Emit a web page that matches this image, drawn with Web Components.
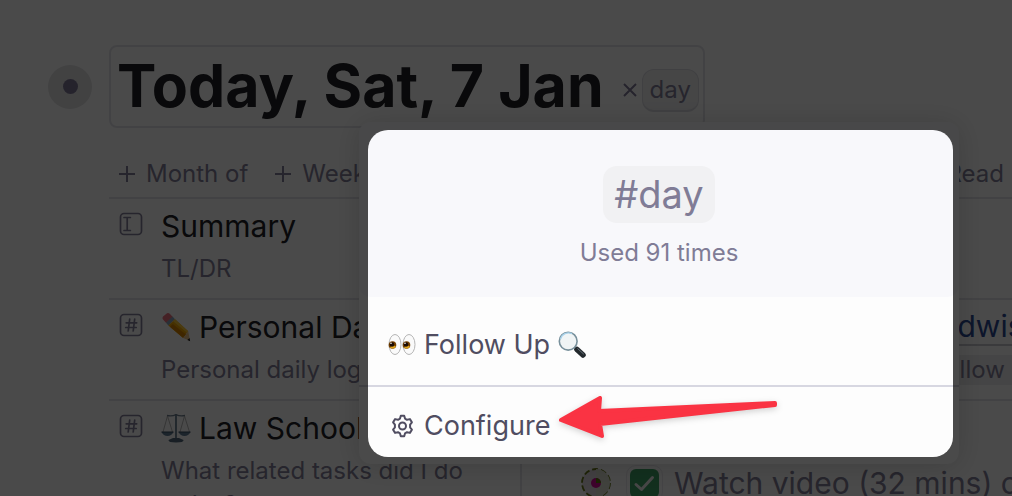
<!DOCTYPE html>
<html lang="en">
<head>
<meta charset="utf-8">
<meta name="viewport" content="width=device-width, initial-scale=1">
<title>Today, Sat, 7 Jan</title>
<style>
  body { margin: 0; background: #fff; font-family: Inter, "Liberation Sans", sans-serif; overflow: hidden; }
</style>
</head>
<body>
<day-page></day-page>

<template id="tpl-day-page">
  <style>
    :host {
      display: block; position: relative; box-sizing: border-box;
      height: 100vh; overflow: hidden; padding: 45px 0 0 48px;
      --ink: #222226; --muted: #85819a; --line: #e4e4ea; --label: #504d61;
      color: var(--ink);
    }
    main { display: flex; flex-direction: column; }
    .fields { margin-left: 61px; }
    .value { display: flex; flex-direction: column; white-space: nowrap; }
    .value.source { padding-left: 384px; }
    .value.tasks { border-left: 2px solid var(--line); padding: 61px 0 40px 59px; }
    .value a { padding-top: 8px; font-size: 30px; line-height: 36px; color: #2a4a94; text-decoration: none; border-bottom: 2px solid #c9c9d0; }
    .chip { font-size: 24px; line-height: 30px; margin-top: 9px; background: #eeeef0; color: var(--muted); padding-left: 28px; }
    .pencil, .scales { flex: none; }
  </style>
  <main>
    <day-title tag="day">Today, Sat, 7 Jan</day-title>
    <div class="fields">
      <add-bar></add-bar>
      <field-row kind="text">
        <span slot="name">Summary</span>
        <span slot="hint">TL/DR</span>
      </field-row>
      <field-row kind="tag">
        <svg slot="name" class="pencil" width="30" height="30" viewBox="0 0 30 30" role="img" aria-label="pencil">
          <path d="M2 4.500 6 1.200Q7.500 .4 9 2L12 5.200 5.200 11 2 7.600Q.8 6 2 4.500Z" fill="#ee7280"/>
          <path d="M5 10.800 11.500 4.600 14 7.200 7.400 13.600Z" fill="#8ca7bd"/>
          <path d="M7.300 13.600 14 7.200 27.200 19.200 22.200 26Z" fill="#f4a800"/>
          <path d="M9 14.800 11.800 12 25 22.500 22.200 26Z" fill="#d98500"/>
          <path d="M12 9.200 14 7.200 27.200 19.200 26.400 21Z" fill="#ffca38"/>
          <path d="M22.200 26Q22.800 23.600 24.600 23.500 24.600 20.400 27.200 19.200L29 28.800Z" fill="#f0c68c"/>
          <path d="M26.300 28 28.600 26 29.200 29.200Z" fill="#222"/>
        </svg>
        <span slot="name">Personal Daily</span>
        <span slot="hint">Personal daily log</span>
        <div slot="value" class="value source">
          <a href="#readwise">Readwise</a>
          <span class="chip">Follow Up</span>
        </div>
      </field-row>
      <field-row kind="tag">
        <svg slot="name" class="scales" width="30" height="30" viewBox="0 0 30 30" role="img" aria-label="scales" fill="none">
          <path d="M6 2.500Q11 3.500 15 1.600 19 3.500 24 2.500" stroke="#708090" stroke-width="1.300"/>
          <path d="M15 1V27" stroke="#697f91" stroke-width="1.800"/>
          <path d="M6.500 3 2 19M6.500 3 11.500 19M23.500 3 19 19M23.500 3 28.500 19" stroke="#a5a5a5" stroke-width=".8"/>
          <path d="M.5 19H12.500Q10.500 23 6.500 23T.5 19ZM17.500 19H29.500Q27.500 23 23.500 23T17.500 19Z" fill="#607d95"/>
          <path d="M.5 19H12.500M17.500 19H29.500" stroke="#354d60"/>
          <path d="M12 25H18L22.500 27Q23 29.500 15 29.500T7.500 27Z" fill="#52697b"/>
        </svg>
        <span slot="name">Law School</span>
        <span slot="hint">What related tasks did I do today?</span>
        <div slot="value" class="value tasks"><task-item>Watch video (32 mins) on</task-item></div>
      </field-row>
    </div>
  </main>
  <tag-popover tag="#day" usage="Used 91 times"></tag-popover>
</template>

<template id="tpl-day-title">
  <style>
    :host { display: flex; align-items: center; gap: 17px; }
    .bullet { flex: none; width: 44px; height: 44px; border-radius: 50%; background: #e2e2e4; display: grid; place-items: center; }
    .bullet::after { content: ""; width: 15px; height: 15px; border-radius: 50%; background: #807a99; }
    .box { display: flex; align-items: center; box-sizing: border-box; height: 83px; padding: 0 4px 2px 6px; border: 2px solid var(--line); border-radius: 8px; white-space: nowrap; }
    h1 { margin: 0; font-size: 59px; line-height: 72px; font-weight: 700; }
    button { all: unset; display: grid; place-items: center; width: 16px; height: 16px; margin: 8px 4px 0 18px; }
    .tag { box-sizing: border-box; height: 43px; margin-top: 10px; padding: 0 7px; border: 1px solid #dcdce2; border-bottom-width: 2px; border-radius: 12px; background: #f0f0f2; color: var(--muted); font-size: 24px; line-height: 40px; }
  </style>
  <span class="bullet"></span>
  <div class="box">
    <h1><slot></slot></h1>
    <button type="button" aria-label="Remove tag"><svg width="16" height="16" viewBox="0 0 16 16" stroke="#807a99" stroke-width="2"><path d="M2 2 14 14M14 2 2 14"/></svg></button>
    <span class="tag"></span>
  </div>
</template>

<template id="tpl-add-bar">
  <style>
    :host { display: flex; align-items: center; gap: 26px; height: 38px; padding: 27px 8px 4px 9px; white-space: nowrap; }
    button { all: unset; display: flex; align-items: center; gap: 10px; font-size: 24px; line-height: 32px; color: var(--muted); }
    button:last-child { margin-left: auto; }
  </style>
  <button type="button"><svg width="18" height="18" viewBox="0 0 18 18" stroke="#85819a" stroke-width="2"><path d="M9 1V17M1 9H17"/></svg>Month of</button>
  <button type="button"><svg width="18" height="18" viewBox="0 0 18 18" stroke="#85819a" stroke-width="2"><path d="M9 1V17M1 9H17"/></svg>Week</button>
  <button type="button">Read</button>
</template>

<template id="tpl-field-row">
  <style>
    :host { display: grid; grid-template-columns: 411px 1fr; border-top: 2px solid var(--line); }
    .field { display: grid; grid-template-columns: 24px 1fr; column-gap: 18px; padding: 9px 48px 12px 10px; align-content: start; align-items: center; }
    .name { display: flex; align-items: center; gap: 8px; font-size: 30px; line-height: 36px; white-space: nowrap; }
    .hint { grid-column: 2; margin-top: 8px; font-size: 24px; line-height: 34px; color: var(--muted); }
    .kind { display: block; margin-bottom: 4px; }
    .text, .hash { display: none; }
    :host([kind="text"]) .text, :host([kind="tag"]) .hash { display: inline; }
  </style>
  <div class="field">
    <svg class="kind" width="24" height="24" viewBox="0 0 24 24" fill="none" stroke="#85819a" stroke-width="1.700" stroke-linecap="round">
      <rect x="1.500" y="1.500" width="21" height="21" rx="3.500"/>
      <path class="text" d="M8.200 5.500V18.500M5 5.500H11.400M5 18.500H11.400"/>
      <path class="hash" d="M10.700 6 9.200 18M15.700 6 14.200 18M7.200 9.800H17.700M6.700 14.500H17.200"/>
    </svg>
    <div class="name"><slot name="name"></slot></div>
    <div class="hint"><slot name="hint"></slot></div>
  </div>
  <slot name="value"></slot>
</template>

<template id="tpl-task-item">
  <style>
    :host { display: flex; align-items: center; font-size: 30px; line-height: 42px; color: var(--muted); }
    .node { flex: none; margin-right: 19px; }
    label { display: flex; align-items: center; gap: 15px; }
    .check { display: grid; }
    input, .check svg { grid-area: 1 / 1; }
    input { appearance: none; margin: 0; width: 29px; height: 29px; border-radius: 6px; background: #3fa568; outline: 1px solid #eceaf0; outline-offset: 3px; }
    .check svg { pointer-events: none; z-index: 1; }
  </style>
  <svg class="node" width="30" height="30" viewBox="0 0 30 30">
    <circle cx="15" cy="15" r="14" fill="#e4dce4" stroke="#6b7a1c" stroke-width="1.800" stroke-dasharray="6 2.800"/>
    <path d="M15 15V1A14 14 0 0 1 15 29Z" fill="#dfe2d4"/>
    <circle cx="15" cy="15" r="5" fill="#d60d98"/><path d="M15 15V10A5 5 0 0 1 20 15Z" fill="#5e7a0b"/>
  </svg>
  <label><span class="check"><input type="checkbox" checked><svg width="29" height="29" viewBox="0 0 29 29" fill="none" stroke="#f4f4f4" stroke-width="3" stroke-linecap="round" stroke-linejoin="round"><path d="M6 15.500 11.500 20.500 22.500 8.500"/></svg></span><span><slot></slot></span></label>
</template>

<template id="tpl-tag-popover">
  <style>
    :host { position: absolute; z-index: 2; top: 122px; left: 359px; width: 600px; border-radius: 12px; background: #fdfdfd; box-shadow: 0 2px 28px rgba(0,0,0,.16); }
    header { display: flex; flex-direction: column; align-items: center; gap: 14px; padding: 44px 0 28px; border-radius: 12px; background: #f8f8fb; color: #807c96; }
    .tag { padding: 0 11px; border-radius: 14px; background: #f1f1f3; font-size: 38px; line-height: 57px; }
    .usage { font-size: 24px; line-height: 32px; }
    button { all: unset; box-sizing: border-box; display: flex; align-items: center; width: 100%; color: var(--label); font-size: 27px; line-height: 36px; }
    .follow { gap: 8px; padding: 30px 29px 22px; }
    .configure { gap: 10px; padding: 21px 32px 20px; border-top: 2px solid #d7d7e1; }
    /* Everything outside this frame is dimmed. */
    .spotlight { position: absolute; inset: 8px 6px 7px 9px; border-radius: 20px; box-shadow: 0 0 0 1200px rgba(0,0,0,.71); pointer-events: none; }
    .arrow { position: absolute; left: 196px; top: 270px; filter: drop-shadow(0 2px 3px rgba(0,0,0,.18)); pointer-events: none; }
  </style>
  <header><span class="tag"></span><span class="usage"></span></header>
  <button type="button" class="follow">
    <svg width="28" height="28" viewBox="0 0 28 28" role="img" aria-label="eyes">
      <g fill="#fafafa" stroke="#b5b5b5"><ellipse cx="7" cy="13.500" rx="6" ry="10"/><ellipse cx="21" cy="13.500" rx="6" ry="10"/></g>
      <g fill="#744000"><circle cx="4.500" cy="14" r="3.800"/><circle cx="18.500" cy="14" r="3.800"/></g>
      <g fill="#e0a51f"><path d="M2 16.500A4 4 0 0 0 8 15.500L4.500 14Z"/><path d="M16 16.500A4 4 0 0 0 22 15.500L18.500 14Z"/></g>
      <g fill="#1b0b05"><circle cx="4" cy="13.500" r="2.300"/><circle cx="18" cy="13.500" r="2.300"/></g>
      <g fill="#fff"><circle cx="3" cy="12.300" r=".8"/><circle cx="17" cy="12.300" r=".8"/></g>
    </svg>
    <span>Follow Up</span>
    <svg width="28" height="28" viewBox="0 0 28 28" role="img" aria-label="magnifying glass">
      <path d="M16.500 16.500 20 20" stroke="#8d969c" stroke-width="3"/>
      <path d="M19 18.500 25 24" stroke="#23292d" stroke-width="5.500" stroke-linecap="round"/>
      <path d="M19.500 17.500 25.800 23.200" stroke="#68737b" stroke-width="1"/>
      <circle cx="10.200" cy="10.200" r="8.900" fill="#f0f4f5" stroke="#78909b" stroke-width="1.600"/>
      <path d="M2.500 8A8.300 8.300 0 0 1 14 2.600" fill="none" stroke="#a9d2ea" stroke-width="1.300"/>
    </svg>
  </button>
  <button type="button" class="configure">
    <svg width="23" height="24" viewBox="0 0 23 24" fill="none" stroke="#504d61" stroke-width="2" stroke-linejoin="round">
      <path d="M9.800 1.800H13.200L14 4.600 16 5.800 18.900 5.100 20.900 8.300 19.100 10.600V13.400L20.900 15.700 18.900 18.900 16 18.200 14 19.400 13.200 22.200H9.800L9 19.400 7 18.200 4.100 18.900 2.100 15.700 3.900 13.400V10.600L2.100 8.300 4.100 5.100 7 5.800 9 4.600Z"/>
      <circle cx="11.500" cy="12" r="3.500"/>
    </svg>
    <span>Configure</span>
  </button>
  <div class="spotlight"></div>
  <svg class="arrow" width="226" height="50" viewBox="0 0 226 50" fill="#fa3343" stroke="#fa3343" stroke-width="4" stroke-linejoin="round">
    <path d="M6 28 45 6 44 19 220 11 220 13 45 32 47 44Z"/>
  </svg>
</template>

<script>
  class TemplateElement extends HTMLElement {
    constructor() {
      super();
      const tpl = document.getElementById('tpl-' + this.localName);
      this.attachShadow({ mode: 'open' }).append(tpl.content.cloneNode(true));
    }
    fill(selector, attribute) {
      this.shadowRoot.querySelector(selector).textContent = this.getAttribute(attribute) || '';
    }
  }
  customElements.define('add-bar', class extends TemplateElement {});
  customElements.define('field-row', class extends TemplateElement {});
  customElements.define('task-item', class extends TemplateElement {});
  customElements.define('day-title', class extends TemplateElement {
    connectedCallback() { this.fill('.tag', 'tag'); }
  });
  customElements.define('tag-popover', class extends TemplateElement {
    connectedCallback() { this.fill('.tag', 'tag'); this.fill('.usage', 'usage'); }
  });
  customElements.define('day-page', class extends TemplateElement {});
</script>
</body>
</html>
